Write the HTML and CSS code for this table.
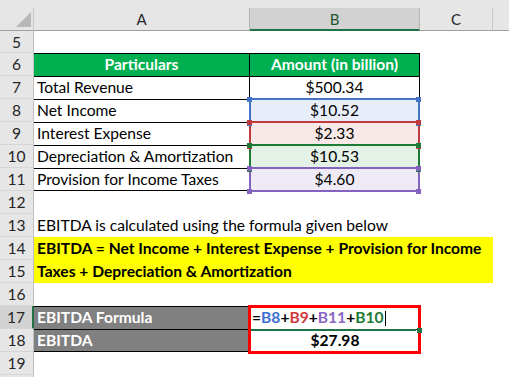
FILE: index.html
```html
<!DOCTYPE html>
<html>
<head>
<meta charset="utf-8">
<link rel="stylesheet" href="styles.css">
</head>
<body>
<div class="sheet">
  <div class="colhead">
    <div class="corner"><span class="tri"></span></div>
    <div class="ch ch-a">A</div>
    <div class="ch ch-b sel">B</div>
    <div class="ch ch-c">C</div>
    <div class="ch ch-d"></div>
  </div>

  <div class="row first"><div class="rh">5</div><div class="ca"></div><div class="cb"></div><div class="cc"></div></div>

  <div class="row"><div class="rh">6</div>
    <div class="ca t head">Particulars</div>
    <div class="cb t head">Amount (in billion)</div>
    <div class="cc"></div></div>

  <div class="row"><div class="rh">7</div>
    <div class="ca t">Total Revenue</div>
    <div class="cb t">$500.34</div>
    <div class="cc"></div></div>

  <div class="row"><div class="rh">8</div>
    <div class="ca t">Net Income</div>
    <div class="cb t hl hl-blue">$10.52</div>
    <div class="cc"></div></div>

  <div class="row"><div class="rh">9</div>
    <div class="ca t">Interest Expense</div>
    <div class="cb t hl hl-red">$2.33</div>
    <div class="cc"></div></div>

  <div class="row"><div class="rh">10</div>
    <div class="ca t">Depreciation &amp; Amortization</div>
    <div class="cb t hl hl-green">$10.53</div>
    <div class="cc"></div></div>

  <div class="row"><div class="rh">11</div>
    <div class="ca t last">Provision for Income Taxes</div>
    <div class="cb t last hl hl-purple">$4.60</div>
    <div class="cc"></div></div>

  <div class="row"><div class="rh">12</div><div class="ca"></div><div class="cb"></div><div class="cc"></div></div>

  <div class="row"><div class="rh">13</div>
    <div class="ca note">EBITDA is calculated using the formula given below</div></div>

  <div class="row"><div class="rh">14</div>
    <div class="wide">EBITDA = Net Income + Interest Expense + Provision for Income</div></div>

  <div class="row"><div class="rh">15</div>
    <div class="wide">Taxes + Depreciation &amp; Amortization</div></div>

  <div class="row"><div class="rh">16</div><div class="ca"></div><div class="cb"></div><div class="cc"></div></div>

  <div class="row"><div class="rh sel">17</div>
    <div class="ca g">EBITDA Formula</div>
    <div class="cb g-b formula"><span>=</span><span class="f-blue">B8</span><span>+</span><span class="f-red">B9</span><span>+</span><span class="f-purple">B11</span><span>+</span><span class="f-green">B10</span><span class="caret"></span><span class="active-line"></span><span class="active-handle"></span></div>
    <div class="cc"></div></div>

  <div class="row"><div class="rh">18</div>
    <div class="ca g last">EBITDA</div>
    <div class="cb g-b last total">$27.98</div>
    <div class="cc"></div></div>

  <div class="row"><div class="rh">19</div><div class="ca"></div><div class="cb"></div><div class="cc"></div></div>
  <div class="row tail"><div class="rh"></div></div>
</div>
</body>
</html>
```
FILE: styles.css
```css
html, body {
  margin: 0;
  padding: 0;
  background: #ffffff;
}
body {
  width: 509px;
  height: 377px;
  overflow: hidden;
  font-family: "Lato", "Liberation Sans", sans-serif;
  font-size: 15.6px;
  color: #000;
}
.sheet {
  display: flex;
  flex-direction: column;
}

/* column header strip */
.colhead {
  display: flex;
  height: 31px;
  padding-top: 8px;
  box-sizing: border-box;
  background: #e6e6e6;
}
.corner {
  width: 34px;
  height: 23px;
  box-sizing: border-box;
  border-right: 1px solid #c8c8c8;
  border-bottom: 1px solid #a0a0a0;
  display: flex;
  justify-content: flex-end;
  align-items: flex-end;
  padding: 0 2px 3px 0;
}
.tri {
  width: 0;
  height: 0;
  border-left: 15px solid transparent;
  border-bottom: 15px solid #b8b8b8;
}
.ch {
  height: 23px;
  box-sizing: border-box;
  border-bottom: 1px solid #a0a0a0;
  border-right: 1px solid #b4b4b4;
  text-align: center;
  line-height: 22px;
  font-size: 15px;
  color: #262626;
}
.ch-a { width: 216px; }
.ch-b { width: 170px; }
.ch-c { width: 73px; border-right-color: #c8c8c8; }
.ch-d { flex: 1; border-right: 0; }
.ch.sel {
  background: #d2d2d2;
  border-bottom: 2px solid #217346;
  color: #215732;
}

/* rows */
.row {
  display: flex;
  height: 23px;
}
.row.first { height: 22px; }
.row.tail { height: 2px; }
.rh {
  width: 34px;
  flex: none;
  box-sizing: border-box;
  background: #e6e6e6;
  border-right: 1px solid #c0c0c0;
  border-bottom: 1px solid #d6d6d6;
  text-align: center;
  line-height: 22px;
  color: #262626;
}
.tail .rh { border-bottom: 0; }
.rh.sel {
  background: #d2d2d2;
  border-right: 2px solid #217346;
}
.ca, .cb, .cc {
  flex: none;
  box-sizing: border-box;
  height: 100%;
  line-height: 23px;
  white-space: nowrap;
}
.ca { width: 216px; padding-left: 3px; }
.cb { width: 170px; text-align: center; }
.cc { width: 73px; }

/* bordered table */
.t {
  border-top: 1px solid #000;
  line-height: 21px;
}
.ca.t { border-right: 1px solid #000; }
.cb.t { border-right: 1px solid #000; }
.t.last, .g.last, .g-b.last { border-bottom: 1px solid #000; }
.head {
  background: #00b050;
  color: #fff;
  font-weight: 700;
  text-align: center;
  padding-left: 0;
}

/* reference highlights */
.hl { position: relative; }
.hl::after {
  content: "";
  position: absolute;
  left: -1px;
  right: -1px;
  top: -2px;
  bottom: -2px;
  border: 2px solid var(--c);
}
.hl::before {
  content: "";
  position: absolute;
  left: -3px;
  right: -2px;
  top: -3px;
  bottom: -4px;
  z-index: 1;
  background:
    linear-gradient(var(--c), var(--c)) left top / 5px 5px no-repeat,
    linear-gradient(var(--c), var(--c)) right top / 5px 5px no-repeat,
    linear-gradient(var(--c), var(--c)) left bottom / 5px 5px no-repeat,
    linear-gradient(var(--c), var(--c)) right bottom / 5px 5px no-repeat;
}
.hl-blue { --c: #4472c4; background: #e8eef9; }
.hl-red { --c: #c0393e; background: #f9e8e8; }
.hl-green { --c: #1d7b35; background: #e3f1e6; }
.hl-purple { --c: #8462c0; background: #eeebf7; }

/* note */
.note { overflow: visible; }

/* yellow formula text */
.wide {
  width: 459px;
  flex: none;
  background: #ffff00;
  font-weight: 700;
  padding-left: 3px;
  box-sizing: border-box;
  line-height: 23px;
  white-space: nowrap;
}

/* EBITDA block */
.g {
  background: #808080;
  color: #fff;
  font-weight: 700;
  border-top: 1px solid #000;
  border-right: 1px solid #000;
  line-height: 21px;
}
.g-b {
  border-top: 1px solid #000;
  line-height: 21px;
  font-weight: 700;
}
.formula {
  position: relative;
  text-align: left;
  padding-left: 2px;
}
.formula::after {
  content: "";
  position: absolute;
  left: -2px;
  top: -2px;
  width: 173px;
  height: 49px;
  box-sizing: border-box;
  border: 3px solid #ff0000;
  z-index: 2;
}
.f-blue { color: #3e6fd0; }
.f-red { color: #d0393e; }
.f-purple { color: #8c68c4; }
.f-green { color: #1d7b35; }
.caret {
  display: inline-block;
  width: 1px;
  height: 15px;
  background: #000;
  margin-left: 1px;
  vertical-align: -3px;
}
.active-line {
  position: absolute;
  left: 1px;
  width: 165px;
  bottom: -2px;
  height: 2px;
  background: #217346;
  z-index: 3;
}
.active-handle {
  position: absolute;
  left: 167px;
  bottom: -4px;
  width: 5px;
  height: 5px;
  background: #217346;
  z-index: 3;
}
.total { text-align: center; }
```
